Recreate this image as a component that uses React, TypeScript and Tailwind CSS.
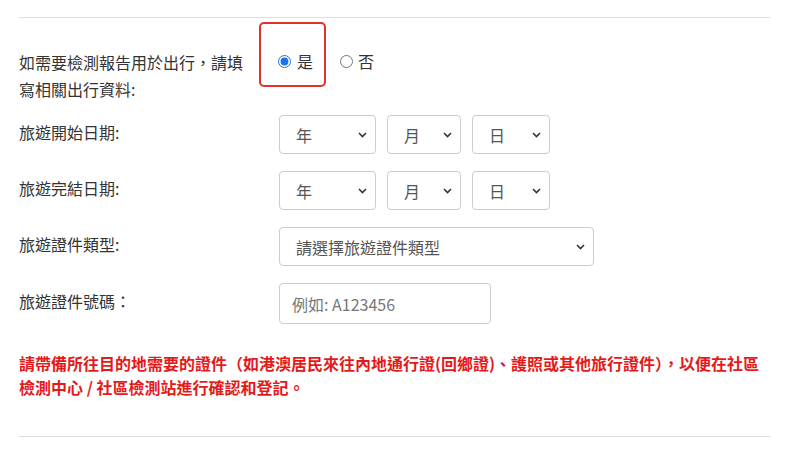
import React from "react";

const Chevron = () => (
  <svg
    className="pointer-events-none absolute right-[9px] top-1/2 -translate-y-1/2"
    width="9"
    height="6"
    viewBox="0 0 9 6"
    fill="none"
  >
    <path d="M1 1l3.5 3.5L8 1" stroke="#333" strokeWidth="1.6" />
  </svg>
);

const Select = ({ label, width }: { label: string; width: string }) => (
  <div className={`relative ${width} h-[39px]`}>
    <select className="h-full w-full appearance-none rounded-[4px] border border-[#ccc] bg-white pl-[16px] text-[16px] text-[#555] outline-none">
      <option>{label}</option>
    </select>
    <Chevron />
  </div>
);

const App = () => {
  const labelCls = "w-[260px] shrink-0 text-[16px] leading-[24px] text-[#333] -mt-[5px]";

  return (
    <div className="h-[455px] w-[798px] overflow-hidden bg-white font-['Noto_Sans_CJK_TC','Noto_Sans',sans-serif]">
      <div className="mx-[19px] w-[751px] pt-[17px]">
        <div className="border-t border-[#ddd]" />

        <div className="mt-[4px] flex items-start">
          <div className="w-[240px] shrink-0 pt-[27px]">
            <p className="w-[232px] text-[16px] leading-[27px] text-[#333]">
              如需要檢測報告用於出行，請填寫相關出行資料:
            </p>
          </div>
          <div className="flex h-[65px] items-start">
            <label className="flex h-[65px] w-[67px] items-center rounded-[5px] border-2 border-[#e2312b] pl-[17px] pt-[13px]">
              <input
                type="radio"
                name="travel"
                defaultChecked
                className="m-0 h-[13px] w-[13px] accent-[#1a73e8]"
              />
              <span className="ml-[6px] text-[16px] text-[#333]">是</span>
            </label>
            <label className="ml-[14px] flex h-[65px] items-center pt-[13px]">
              <input
                type="radio"
                name="travel"
                className="m-0 h-[13px] w-[13px]"
              />
              <span className="ml-[5px] text-[16px] text-[#333]">否</span>
            </label>
          </div>
        </div>

        <div className="mt-[12px] flex h-[39px] items-center">
          <div className={labelCls}>旅遊開始日期:</div>
          <div className="flex gap-[11px]">
            <Select label="年" width="w-[97px]" />
            <Select label="月" width="w-[74px]" />
            <Select label="日" width="w-[78px]" />
          </div>
        </div>

        <div className="mt-[17px] flex h-[39px] items-center">
          <div className={labelCls}>旅遊完結日期:</div>
          <div className="flex gap-[11px]">
            <Select label="年" width="w-[97px]" />
            <Select label="月" width="w-[74px]" />
            <Select label="日" width="w-[78px]" />
          </div>
        </div>

        <div className="mt-[17px] flex h-[39px] items-center">
          <div className={labelCls}>旅遊證件類型:</div>
          <Select label="請選擇旅遊證件類型" width="w-[315px]" />
        </div>

        <div className="mt-[17px] flex h-[41px] items-center">
          <div className={labelCls}>旅遊證件號碼：</div>
          <input
            type="text"
            placeholder="例如: A123456"
            className="h-[41px] w-[212px] rounded-[4px] border border-[#ccc] px-[12px] text-[16px] text-[#555] outline-none placeholder:text-[#777]"
          />
        </div>

        <p className="mt-[27px] text-[16px] font-bold leading-[24px] text-[#e41a1a]">
          請帶備所往目的地需要的證件（如港澳居民來往內地通行證(回鄉證)、護照或其他旅行證件），以便在社區
          <br />
          檢測中心 / 社區檢測站進行確認和登記。
        </p>

        <div className="mt-[37px] border-t border-[#ddd]" />
      </div>
    </div>
  );
};

export default App;
